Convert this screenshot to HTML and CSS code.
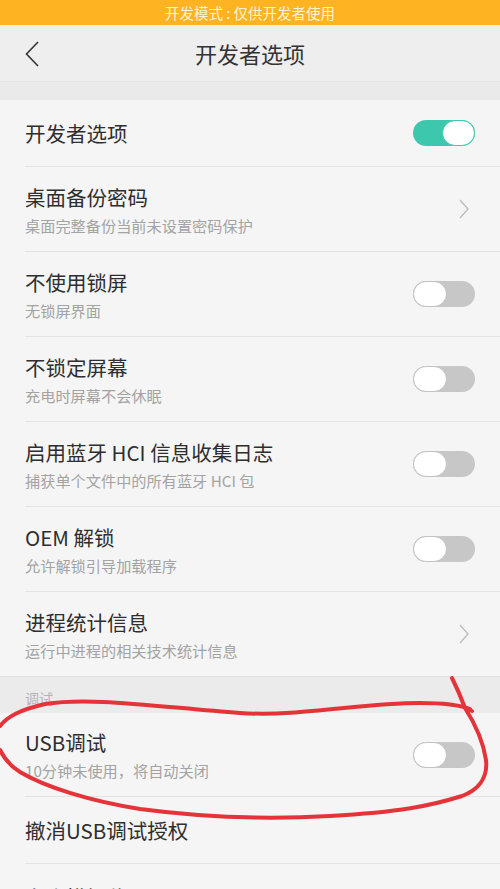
FILE: index.html
```html
<!DOCTYPE html>
<html lang="zh-CN">
<head>
<meta charset="utf-8">
<link rel="stylesheet" href="styles.css">
</head>
<body>
<div class="page">
  <div class="status">开发模式 : 仅供开发者使用</div>
  <div class="header">
    <svg class="back" width="14" height="26" viewBox="0 0 14 26"><path d="M13 1 L1.5 13 L13 25" fill="none" stroke="#333" stroke-width="1.6"/></svg>
    <div class="title">开发者选项</div>
  </div>
  <div class="gap"></div>
  <div class="list">
    <div class="row single">
      <div class="text"><div class="t">开发者选项</div></div>
      <div class="toggle on"><span class="knob"></span></div>
    </div>
    <div class="row">
      <div class="text"><div class="t">桌面备份密码</div><div class="s">桌面完整备份当前未设置密码保护</div></div>
      <svg class="chev" width="10" height="20" viewBox="0 0 10 20"><path d="M1 1 L9 10 L1 19" fill="none" stroke="#BDBDBD" stroke-width="1.4"/></svg>
    </div>
    <div class="row">
      <div class="text"><div class="t">不使用锁屏</div><div class="s">无锁屏界面</div></div>
      <div class="toggle"><span class="knob"></span></div>
    </div>
    <div class="row">
      <div class="text"><div class="t">不锁定屏幕</div><div class="s">充电时屏幕不会休眠</div></div>
      <div class="toggle"><span class="knob"></span></div>
    </div>
    <div class="row">
      <div class="text"><div class="t">启用蓝牙 HCI 信息收集日志</div><div class="s">捕获单个文件中的所有蓝牙 HCI 包</div></div>
      <div class="toggle"><span class="knob"></span></div>
    </div>
    <div class="row">
      <div class="text"><div class="t">OEM 解锁</div><div class="s">允许解锁引导加载程序</div></div>
      <div class="toggle"><span class="knob"></span></div>
    </div>
    <div class="row last">
      <div class="text"><div class="t">进程统计信息</div><div class="s">运行中进程的相关技术统计信息</div></div>
      <svg class="chev" width="10" height="20" viewBox="0 0 10 20"><path d="M1 1 L9 10 L1 19" fill="none" stroke="#BDBDBD" stroke-width="1.4"/></svg>
    </div>
    <div class="section">调试</div>
    <div class="row usb">
      <div class="text"><div class="t">USB调试</div><div class="s">10分钟未使用，将自动关闭</div></div>
      <div class="toggle"><span class="knob"></span></div>
    </div>
    <div class="row single">
      <div class="text"><div class="t">撤消USB调试授权</div></div>
    </div>
    <div class="row single">
      <div class="text"><div class="t">允许模拟位置</div></div>
    </div>
  </div>
  <svg class="annot" width="500" height="889" viewBox="0 0 500 889">
    <path d="M452 678 C458 690 462 700 465 708 L472 711 M465 708 C474 722 483 740 486 760 C488 778 478 790 462 796 C430 806 400 812 330 816 C260 820 200 817 140 809 C90 801 45 787 20 772 C10 766 4 758 0 750" fill="none" stroke="#E5333A" stroke-width="4" stroke-linecap="round" stroke-linejoin="round"/>
    <path d="M0 726 C8 716 20 710 45 704 C90 697 150 706 240 713 C300 717 360 703 420 703 C445 703 460 705 470 709" fill="none" stroke="#E5333A" stroke-width="4" stroke-linecap="round"/>
  </svg>
</div>
</body>
</html>
```
FILE: styles.css
```css
* { box-sizing: border-box; }
html, body { margin: 0; padding: 0; }
body {
  width: 500px;
  height: 889px;
  overflow: hidden;
  background: #F5F5F5;
  font-family: "Noto Sans CJK SC", "Noto Sans", sans-serif;
}
.page { position: relative; width: 500px; height: 889px; overflow: hidden; }
.status {
  height: 25px;
  background: #FDB322;
  color: #FFF3D2;
  font-size: 14.5px;
  line-height: 25px;
  text-align: center;
}
.header {
  height: 57px;
  background: #EEEEEE;
  display: flex;
  align-items: center;
  justify-content: center;
  position: relative;
  border-bottom: 1px solid #E2E2E2;
}
.back { position: absolute; left: 25px; top: 16px; }
.title { font-size: 22px; color: #333; line-height: 30px; }
.gap { height: 18px; background: #EAEAEA; }
.list { background: #F5F5F5; }
.row {
  margin-left: 25px;
  padding-right: 25px;
  height: 85px;
  display: flex;
  align-items: center;
  justify-content: space-between;
  border-bottom: 1px solid #E4E4E4;
}
.row.single { height: 67px; }
.row.last { border-bottom: none; height: 84px; }
.row.usb { height: 84px; }
.text { display: flex; flex-direction: column; }
.t { font-size: 20.5px; color: #2E2E2E; line-height: 28px; }
.s { font-size: 15.2px; color: #A3A3A3; line-height: 22px; margin-top: 3px; }
.chev { margin-right: 6px; }
.section {
  height: 37px;
  background: #EBEBEB;
  border-top: 1px solid #E0E0E0;
  color: #B4B4B4;
  font-size: 14px;
  padding-left: 25px;
  padding-top: 11px;
  line-height: 20px;
}
.toggle {
  width: 62px;
  height: 26px;
  border-radius: 13px;
  background: #C7C7C7;
  position: relative;
  flex: none;
}
.toggle .knob {
  position: absolute;
  left: 0; top: 0;
  width: 34px;
  height: 26px;
  border-radius: 13px;
  background: #FFFFFF;
  border: 1px solid #C2C2C2;
}
.toggle.on { background: #3DC8AD; }
.toggle.on .knob { left: auto; right: 0; border-color: #3DC8AD; width: 33px; }
.annot { position: absolute; left: 0; top: 0; pointer-events: none; }
```
